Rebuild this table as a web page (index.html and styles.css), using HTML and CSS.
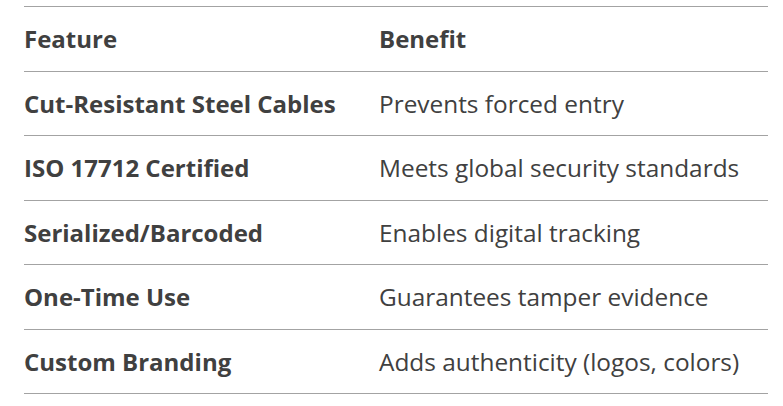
FILE: index.html
```html
<!DOCTYPE html>
<html lang="en">
<head>
<meta charset="utf-8">
<title>Features</title>
<link rel="stylesheet" href="styles.css">
</head>
<body>
<table class="features">
  <thead>
    <tr><th class="col-feature">Feature</th><th>Benefit</th></tr>
  </thead>
  <tbody>
    <tr><td class="feat">Cut-Resistant Steel Cables</td><td class="benefit">Prevents forced entry</td></tr>
    <tr><td class="feat">ISO 17712 Certified</td><td class="benefit">Meets global security standards</td></tr>
    <tr><td class="feat">Serialized/Barcoded</td><td class="benefit">Enables digital tracking</td></tr>
    <tr><td class="feat">One-Time Use</td><td class="benefit">Guarantees tamper evidence</td></tr>
    <tr><td class="feat">Custom Branding</td><td class="benefit">Adds authenticity (logos, colors)</td></tr>
  </tbody>
</table>
</body>
</html>
```
FILE: styles.css
```css
html, body {
  margin: 0;
  padding: 0;
  background: #ffffff;
}
body {
  padding: 6px 15px 0 24px;
  font-family: "Open Sans", "Noto Sans", Arial, sans-serif;
  font-size: 24px;
  color: #404040;
}
.features {
  width: 744px;
  border-collapse: collapse;
  border-top: 1px solid #a3a3a3;
}
.features th,
.features td {
  height: 63.5px;
  padding: 0;
  text-align: left;
  vertical-align: middle;
  border-bottom: 1px solid #a3a3a3;
}
.features th,
.features .feat {
  font-weight: 700;
}
.features .benefit {
  font-weight: 400;
  font-size: 24.4px;
}
.col-feature {
  width: 355px;
}
```
